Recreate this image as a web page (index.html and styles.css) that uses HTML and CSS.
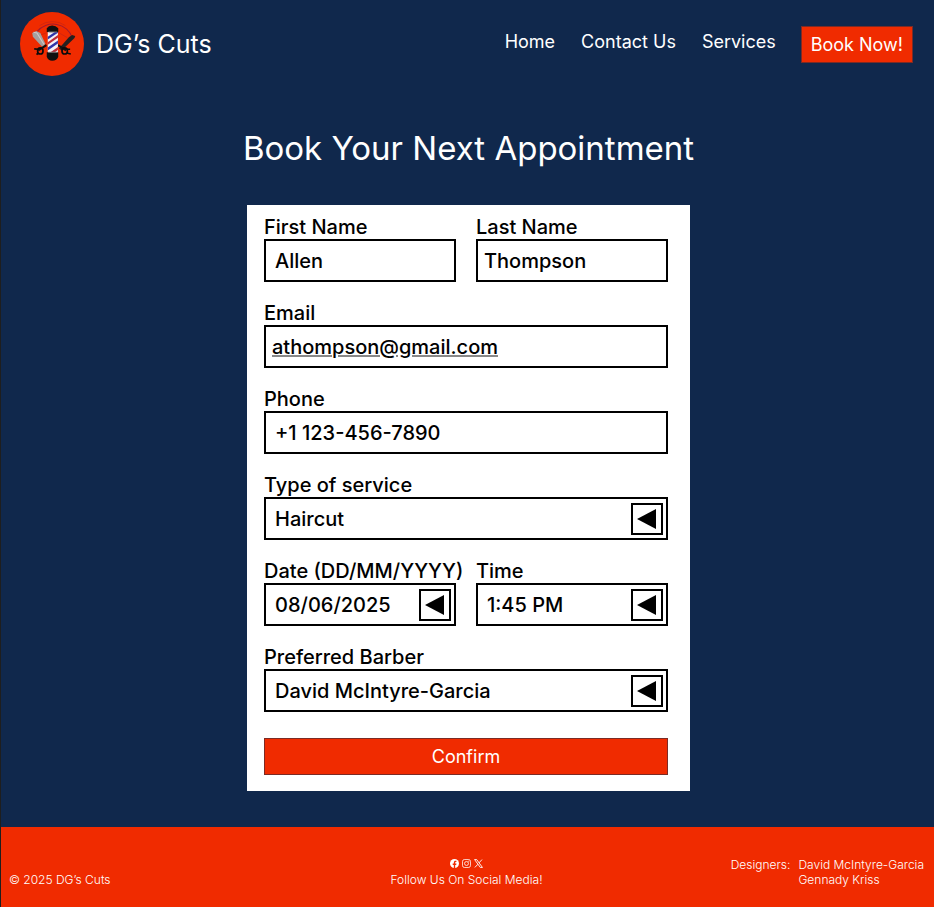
FILE: index.html
```html
<!DOCTYPE html>
<html lang="en">
<head>
<meta charset="utf-8">
<meta name="viewport" content="width=device-width, initial-scale=1">
<title>DG’s Cuts</title>
<link rel="stylesheet" href="styles.css">
</head>
<body>
<header class="header">
  <a class="brand" href="#">
    <svg class="brand-logo" viewBox="0 0 189 189" aria-hidden="true">
      <circle cx="94.500" cy="94.500" r="94.500" fill="#f02b00"/>
      <path d="M50 58a58 52 0 0 1 104 18" fill="none" stroke="#a51b2b" stroke-width="3"/>
      <path d="M58 40a62 56 0 0 1 76 0M62 68l20-8M116 62l24 14" fill="none" stroke="#c72413" stroke-width="2"/>
      <path d="M154 68l9 3-2 6-38 37-8-6 30-34z" fill="#232020"/>
      <path d="M36 62l12-6 12 6 15 32-9 9-28-30z" fill="#a4a09f"/>
      <path d="M40 60l10 2 21 34" fill="none" stroke="#cfc9c7" stroke-width="3"/>
      <path d="M112 98l24 15M78 98l-24 15" stroke="#111" stroke-width="6"/>
      <g fill="none" stroke="#0b0b0b" stroke-width="5">
        <ellipse cx="60" cy="115" rx="8" ry="9"/><ellipse cx="132" cy="115" rx="8" ry="9"/>
        <path d="M54 110l-12-1M54 121l-5 5M138 110l10 0M138 121l12 3"/>
      </g>
      <path d="M82 58h30v62H82z" fill="#f4f1f5"/>
      <path d="M82 73l22-15h8v3L82 81zM82 105l30-21v9l-30 21z" fill="#3035a8"/>
      <path d="M82 89l30-21v8L82 97zM88 120l24-17v9l-11 8z" fill="#bd2c39"/>
      <path d="M79 59V48q5-8 16-8t18 8v11zM79 119h34v13q-4 11-18 12-12-1-16-12z" fill="#101010"/>
      <path d="M84 59h26M83 119h28" stroke="#777" stroke-width="3"/>
    </svg>
    <span>DG’s Cuts</span>
  </a>
  <nav class="nav">
    <ul class="nav-links">
      <li><a href="#">Home</a></li>
      <li><a href="#">Contact Us</a></li>
      <li><a href="#">Services</a></li>
    </ul>
    <button class="button" type="button">Book Now!</button>
  </nav>
</header>

<main class="main">
  <h1 class="title">Book Your Next Appointment</h1>
  <form class="card">
    <div class="field">
      <label for="first">First Name</label>
      <input class="control" id="first" type="text" value="Allen">
    </div>
    <div class="field">
      <label for="last">Last Name</label>
      <input class="control control-snug" id="last" type="text" value="Thompson">
    </div>
    <div class="field field-wide">
      <label for="email">Email</label>
      <input class="control control-snug control-email" id="email" type="email" value="athompson@gmail.com">
    </div>
    <div class="field field-wide">
      <label for="phone">Phone</label>
      <input class="control" id="phone" type="tel" value="+1 123-456-7890">
    </div>
    <div class="field field-wide">
      <label for="service">Type of service</label>
      <div class="picker">
        <select class="control" id="service"><option>Haircut</option></select>
        <svg class="arrow" viewBox="0 0 28 28" aria-hidden="true"><path d="M4 14 23 4v20z"/></svg>
      </div>
    </div>
    <div class="field">
      <label for="date">Date (DD/MM/YYYY)</label>
      <div class="picker">
        <select class="control" id="date"><option>08/06/2025</option></select>
        <svg class="arrow" viewBox="0 0 28 28" aria-hidden="true"><path d="M4 14 23 4v20z"/></svg>
      </div>
    </div>
    <div class="field">
      <label for="time">Time</label>
      <div class="picker">
        <select class="control" id="time"><option>1:45 PM</option></select>
        <svg class="arrow" viewBox="0 0 28 28" aria-hidden="true"><path d="M4 14 23 4v20z"/></svg>
      </div>
    </div>
    <div class="field field-wide">
      <label for="barber">Preferred Barber</label>
      <div class="picker">
        <select class="control" id="barber"><option>David McIntyre-Garcia</option></select>
        <svg class="arrow" viewBox="0 0 28 28" aria-hidden="true"><path d="M4 14 23 4v20z"/></svg>
      </div>
    </div>
    <button class="button confirm" type="submit">Confirm</button>
  </form>
</main>

<footer class="footer">
  <p>© 2025 DG’s Cuts</p>
  <div class="social">
    <div class="social-icons">
      <a href="#" aria-label="Facebook"><svg viewBox="0 0 16 16"><circle cx="8" cy="8" r="8" fill="#fff"/><path d="M6.800 16v-5.500h-2V8h2V6.300c0-2 1.200-3.100 3-3.100l1.600.1v2h-1c-1 0-1.200.5-1.200 1.200V8h2.200l-.4 2.500H9.200V16z" fill="#f02b00"/></svg></a>
      <a href="#" aria-label="Instagram"><svg viewBox="0 0 16 16" fill="none" stroke="#fff" stroke-width="1.400"><rect x=".8" y=".8" width="14.400" height="14.400" rx="4"/><circle cx="8" cy="8" r="3.500"/><circle cx="12.200" cy="3.800" r=".4"/></svg></a>
      <a href="#" aria-label="X"><svg viewBox="0 0 16 16" fill="none" stroke="#fff" stroke-width="1.600"><path d="M1 1h3.800L15 15h-3.800zM14.200 1 8.900 6.900M7 9.200 1.500 15"/></svg></a>
    </div>
    <p>Follow Us On Social Media!</p>
  </div>
  <div class="designers">
    <p>Designers:</p>
    <ul>
      <li>David McIntyre-Garcia</li>
      <li>Gennady Kriss</li>
    </ul>
  </div>
</footer>
</body>
</html>
```
FILE: styles.css
```css
* {
  box-sizing: border-box;
}

body {
  display: flex;
  flex-direction: column;
  min-height: 100vh;
  margin: 0;
  border-left: 1px solid #1e1e1e;
  background: #10284c;
  color: #fff;
  font-family: Inter, "Liberation Sans", sans-serif;
}

p,
ul {
  margin: 0;
  padding: 0;
  list-style: none;
}

a {
  color: inherit;
  text-decoration: none;
}

.header {
  display: flex;
  flex-wrap: wrap;
  align-items: center;
  justify-content: space-between;
  padding: 12px 21px 12px 19px;
}

.brand {
  display: flex;
  align-items: center;
  gap: 12px;
  font-size: 25px;
}

.brand-logo {
  width: 64px;
  height: 64px;
}

.nav {
  display: flex;
  align-items: center;
  gap: 25px;
  font-size: 18px;
}

.nav-links {
  display: flex;
  gap: 26px;
  padding-bottom: 6px;
}

.button {
  height: 37px;
  padding: 0 9px;
  border: 1px solid #7c2b25;
  background: #f02b00;
  color: #fff;
  font-family: inherit;
  font-size: 18px;
}

.main {
  flex: 1;
  padding: 40px 16px 36px 18px;
}

.title {
  margin: 0 0 37px;
  font-size: 33px;
  font-weight: 400;
  line-height: 40px;
  text-align: center;
}

.card {
  display: grid;
  grid-template-columns: 1fr 1fr;
  gap: 19px 20px;
  max-width: 443px;
  margin: 0 auto;
  padding: 10px 22px 16px 17px;
  background: #fff;
  color: #000;
}

.field {
  display: flex;
  flex-direction: column;
  min-width: 0;
  font-size: 20px;
  font-weight: 500;
  line-height: 24px;
}

.field label {
  white-space: nowrap;
}

.field-wide,
.confirm {
  grid-column: 1 / -1;
}

.control {
  width: 100%;
  height: 43px;
  padding: 0 9px;
  border: 2px solid #000;
  border-radius: 0;
  background: #fff;
  color: #000;
  font: inherit;
  appearance: none;
}

.control-snug {
  padding: 0 6px;
}

.control-email {
  text-decoration: underline;
  text-decoration-color: #888;
  text-decoration-thickness: 2px;
}

.picker {
  display: grid;
  align-items: center;
}

.picker > * {
  grid-area: 1 / 1;
}

.arrow {
  justify-self: end;
  width: 32px;
  height: 32px;
  margin-right: 5px;
  border: 2px solid #000;
  pointer-events: none;
}

.confirm {
  margin-top: 7px;
}

.footer {
  display: grid;
  grid-template-columns: 1fr auto 1fr;
  align-items: end;
  padding: 30px 10px 20px 8px;
  background: #f02b00;
  font-size: 12px;
  font-weight: 300;
  line-height: 15px;
}

.social {
  text-align: center;
}

.social-icons {
  display: flex;
  justify-content: center;
  gap: 3px;
  margin-bottom: 4px;
}

.social-icons svg {
  display: block;
  width: 9px;
  height: 9px;
}

.designers {
  display: flex;
  justify-content: flex-end;
  gap: 8px;
}
```
